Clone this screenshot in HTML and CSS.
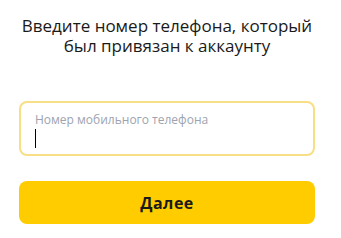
FILE: index.html
```html
<!DOCTYPE html>
<html>
<head>
<meta charset="utf-8">
<title>Телефон</title>
<link rel="stylesheet" href="styles.css">
</head>
<body>
	<div class="page">
		<h1 class="title">Введите номер телефона, который был привязан к аккаунту</h1>
		<div class="field">
			<span class="field-label">Номер мобильного телефона</span>
			<span class="caret"></span>
		</div>
		<button class="btn-next">Далее</button>
	</div>
</body>
</html>
```
FILE: styles.css
```css
* {
	box-sizing: border-box;
}
body {
	margin: 0;
	background: #fff;
	font-family: "Open Sans", "Liberation Sans", Arial, sans-serif;
	color: #000;
}
.page {
	width: 341px;
	padding: 16px 26px 0 19px;
	display: flex;
	flex-direction: column;
}
.title {
	margin: 0;
	font-size: 17px;
	font-weight: normal;
	line-height: 20px;
	text-align: center;
	color: #1a1a1a;
}
.field {
	margin-top: 45px;
	height: 55px;
	border: 2px solid #f8df86;
	border-radius: 8px;
	padding: 9px 14px 0 14px;
	display: flex;
	flex-direction: column;
}
.field-label {
	font-size: 12px;
	line-height: 16px;
	color: #9da3b0;
}
.caret {
	margin-top: 1px;
	width: 1px;
	height: 19px;
	background: #000;
}
.btn-next {
	margin-top: 25px;
	height: 43px;
	border: none;
	border-radius: 8px;
	background: #ffcc00;
	font-family: "Open Sans", "Liberation Sans", Arial, sans-serif;
	font-size: 16px;
	font-weight: 700;
	letter-spacing: 0.5px;
	color: #1a1a1a;
	padding: 0;
}
```
